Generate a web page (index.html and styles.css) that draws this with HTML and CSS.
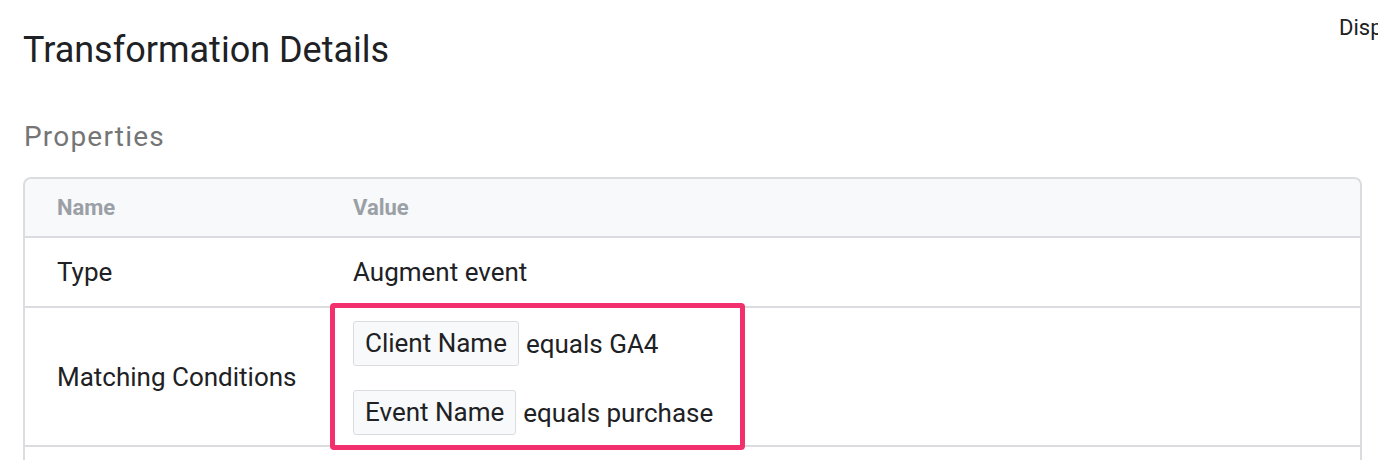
FILE: index.html
```html
<!DOCTYPE html>
<html>
<head>
<meta charset="utf-8">
<link rel="stylesheet" href="styles.css">
</head>
<body>
<div class="page">
  <header class="top">
    <h1 class="title">Transformation Details</h1>
    <div class="side-link">Display options</div>
  </header>
  <h2 class="section">Properties</h2>
  <div class="table">
    <div class="row head">
      <div class="cell name">Name</div>
      <div class="cell value">Value</div>
    </div>
    <div class="row type-row">
      <div class="cell name">Type</div>
      <div class="cell value">Augment event</div>
    </div>
    <div class="row cond-row">
      <div class="cell name">Matching Conditions</div>
      <div class="cell value conds">
        <div class="highlight"></div>
        <div class="cond"><span class="chip">Client Name</span><span>equals GA4</span></div>
        <div class="cond"><span class="chip">Event Name</span><span>equals purchase</span></div>
      </div>
    </div>
    <div class="row type-row">
      <div class="cell name">&nbsp;</div>
      <div class="cell value">&nbsp;</div>
    </div>
  </div>
</div>
</body>
</html>
```
FILE: styles.css
```css
html, body {
  margin: 0;
  padding: 0;
  background: #fff;
  overflow: hidden;
}
body {
  font-family: Roboto, "Liberation Sans", Arial, sans-serif;
  color: #202124;
  width: 1378px;
  height: 460px;
}
.page {
  padding: 0 16px 0 23px;
  width: 1339px;
}
.top {
  position: relative;
  height: 120px;
}
.title {
  margin: 0;
  padding-top: 29px;
  font-size: 36px;
  font-weight: 400;
  line-height: 42px;
  color: #202124;
}
.side-link {
  position: absolute;
  left: 1316px;
  top: 15px;
  font-size: 22px;
  white-space: nowrap;
  color: #202124;
}
.section {
  margin: 0 0 0 1px;
  font-size: 28px;
  font-weight: 400;
  letter-spacing: 1.2px;
  line-height: 34px;
  color: #757575;
  height: 57px;
}
.table {
  border: 2px solid #dadce0;
  border-bottom: none;
  border-radius: 8px 8px 0 0;
}
.row {
  display: flex;
  align-items: center;
  border-top: 2px solid #dadce0;
}
.row.head {
  border-top: none;
  background: #f8f9fa;
  height: 57px;
  border-radius: 7px 7px 0 0;
  font-size: 22px;
  font-weight: 700;
  color: #9aa0a6;
}
.cell {
  padding-left: 32px;
  box-sizing: content-box;
}
.cell.name {
  width: 264px;
}
.cell.value {
  flex: 1;
}
.type-row {
  font-size: 26px;
  height: 68px;
}
.cond-row {
  font-size: 26px;
  height: 137px;
  align-items: stretch;
}
.cond-row .name {
  display: flex;
  align-items: center;
}
.conds {
  position: relative;
  display: flex;
  flex-direction: column;
  gap: 24px;
  padding-top: 13px;
}
.cond {
  display: flex;
  align-items: center;
  gap: 7px;
}
.chip {
  display: inline-block;
  height: 45px;
  line-height: 43px;
  box-sizing: border-box;
  padding: 0 11px;
  background: #f8f9fa;
  border: 1px solid #dadce0;
  border-radius: 3px;
  color: #202124;
}
.highlight {
  position: absolute;
  left: 9px;
  top: -5px;
  width: 415px;
  height: 147px;
  box-sizing: border-box;
  border: 5px solid #f2306d;
  border-radius: 4px;
  pointer-events: none;
}
```
